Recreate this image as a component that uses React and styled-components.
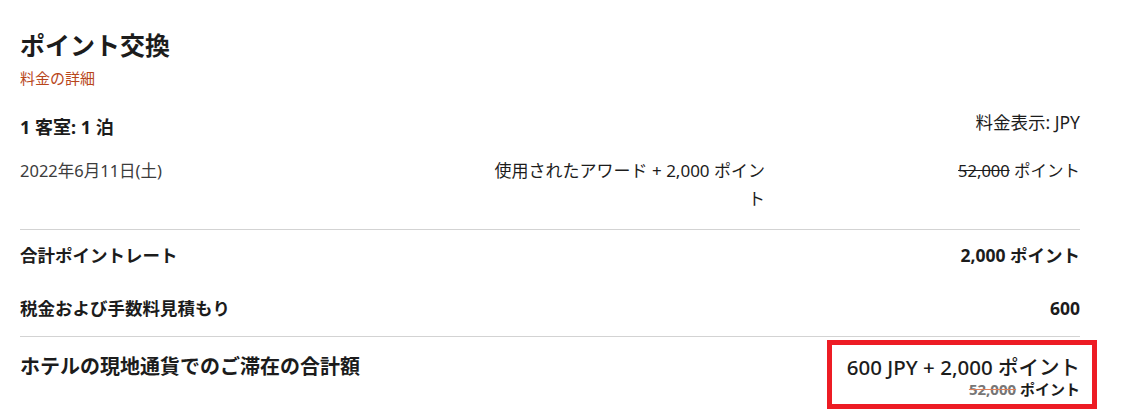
import React from 'react';
import styled, { createGlobalStyle } from 'styled-components';

const GlobalStyle = createGlobalStyle`
  html, body {
    margin: 0;
    padding: 0;
    background: #fff;
  }
  body {
    font-family: "Noto Sans", "Noto Sans CJK JP", sans-serif;
    color: #1c1c1c;
  }
`;

const Page = styled.div`
  width: 1060px;
  padding: 29px 44px 0 20px;
`;

const Title = styled.h2`
  margin: 0;
  font-size: 25px;
  line-height: 32px;
  font-weight: 700;
`;

const DetailLink = styled.a`
  display: block;
  margin-top: 7px;
  font-size: 15px;
  line-height: 20px;
  color: #b8461b;
  text-decoration: none;
`;

const RoomRow = styled.div`
  display: flex;
  justify-content: space-between;
  align-items: flex-start;
  margin-top: 22px;
`;

const RoomText = styled.div`
  font-size: 18px;
  line-height: 34px;
  font-weight: 700;
`;

const Currency = styled.div`
  font-size: 17.5px;
  line-height: 24px;
`;

const NightRow = styled.div`
  display: grid;
  grid-template-columns: 1fr 280px 315px;
  margin-top: 13px;
  font-size: 16.5px;
  line-height: 28px;
  padding-bottom: 16px;
  border-bottom: 1px solid #d3d3d3;
`;

const Cell = styled.div`
  text-align: ${(p) => p.$align || 'left'};
  color: ${(p) => p.$muted ? '#3c3c3c' : '#1c1c1c'};
  font-size: ${(p) => p.$size || 'inherit'};
`;

const Struck = styled.span`
  text-decoration: line-through;
  text-decoration-color: ${(p) => p.$lineColor || 'currentColor'};
  color: ${(p) => p.$color || 'inherit'};
`;

const SummaryBlock = styled.div`
  padding: 13px 0 16px;
  border-bottom: 1px solid #d3d3d3;
  display: flex;
  flex-direction: column;
  gap: 29px;
`;

const SummaryRow = styled.div`
  display: flex;
  justify-content: space-between;
  font-size: 17.5px;
  line-height: 24px;
  font-weight: 700;
`;

const TotalRow = styled.div`
  display: flex;
  justify-content: space-between;
  align-items: flex-start;
  margin-top: 3px;
`;

const TotalLabel = styled.div`
  margin-top: 14px;
  font-size: 20px;
  line-height: 26px;
  font-weight: 700;
`;

const TotalBox = styled.div`
  margin-right: -17px;
  border: 5px solid #ed1c24;
  padding: 9px 12px 6px 13px;
  width: 235px;
  text-align: right;
`;

const TotalMain = styled.div`
  font-size: 20.5px;
  line-height: 26px;
  font-weight: 500;
`;

const TotalSub = styled.div`
  font-size: 15px;
  line-height: 18px;
  font-weight: 700;
`;

export default function App() {
  return (
    <>
      <GlobalStyle />
      <Page>
        <Title>ポイント交換</Title>
        <DetailLink href="#">料金の詳細</DetailLink>
        <RoomRow>
          <RoomText>1 客室: 1 泊</RoomText>
          <Currency>料金表示: JPY</Currency>
        </RoomRow>
        <NightRow>
          <Cell $muted>2022年6月11日(土)</Cell>
          <Cell $align="right" $size="17px">使用されたアワード + 2,000 ポイント</Cell>
          <Cell $align="right"><Struck>52,000</Struck> ポイント</Cell>
        </NightRow>
        <SummaryBlock>
          <SummaryRow>
            <span>合計ポイントレート</span>
            <span>2,000 ポイント</span>
          </SummaryRow>
          <SummaryRow>
            <span>税金および手数料見積もり</span>
            <span>600</span>
          </SummaryRow>
        </SummaryBlock>
        <TotalRow>
          <TotalLabel>ホテルの現地通貨でのご滞在の合計額</TotalLabel>
          <TotalBox>
            <TotalMain>600 JPY + 2,000 ポイント</TotalMain>
            <TotalSub>
              <Struck $color="#767676" $lineColor="#e0805a">52,000</Struck> ポイント
            </TotalSub>
          </TotalBox>
        </TotalRow>
      </Page>
    </>
  );
}
